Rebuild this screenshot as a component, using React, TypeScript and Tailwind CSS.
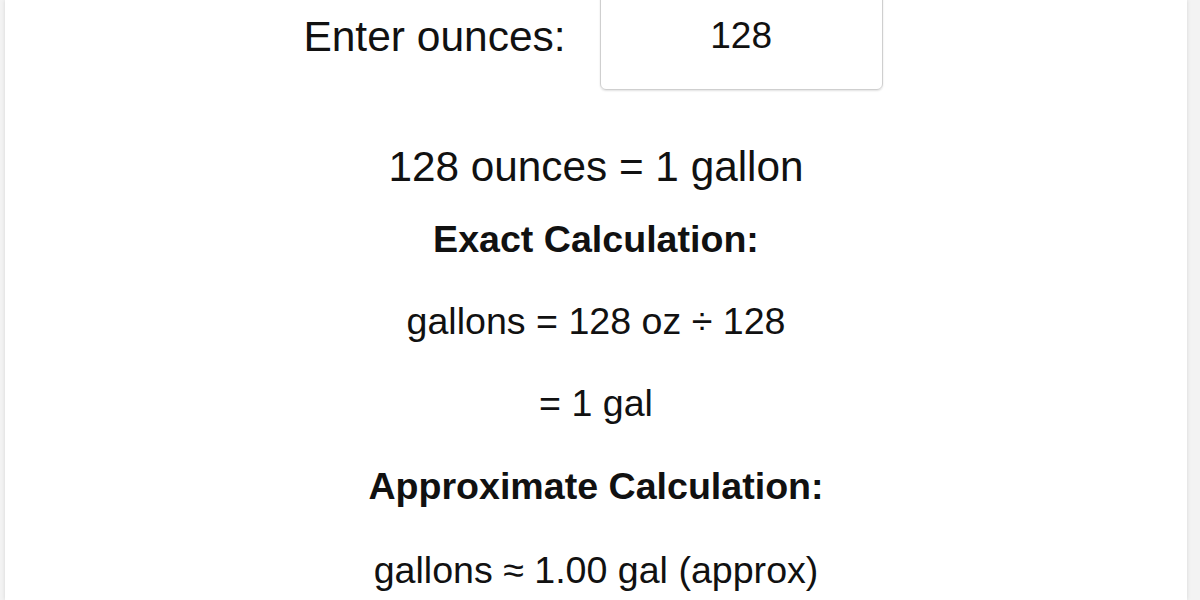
const App = () => {
  return (
    <div className="w-[1200px] h-[600px] overflow-hidden bg-[#f3f3f3] font-['Liberation_Sans',Arial,sans-serif] text-[#111]">
      <div className="ml-[5px] w-[1182px] h-full bg-white shadow-[0_0_4px_rgba(0,0,0,0.12)] flex flex-col items-center">
        <div className="-mt-[18px] flex items-center gap-[34px] ml-[-6px]">
          <label className="text-[42.5px] leading-[49px]">Enter ounces:</label>
          <input
            type="text"
            defaultValue="128"
            className="w-[283px] h-[108px] rounded-[6px] border border-[#cfcfcf] shadow-[0_1px_2px_rgba(0,0,0,0.12)] text-center text-[37px] text-[#111] outline-none"
          />
        </div>
        <p className="mt-[53px] text-[42.3px] leading-[48px]">128 ounces = 1 gallon</p>
        <p className="mt-[27px] text-[37.6px] leading-[43px] font-bold">Exact Calculation:</p>
        <p className="mt-[39px] text-[37.6px] leading-[43px]">gallons = 128 oz ÷ 128</p>
        <p className="mt-[39px] text-[37.6px] leading-[43px]">= 1 gal</p>
        <p className="mt-[40px] text-[37.6px] leading-[43px] font-bold">Approximate Calculation:</p>
        <p className="mt-[41px] text-[37.6px] leading-[43px]">gallons ≈ 1.00 gal (approx)</p>
      </div>
    </div>
  );
};

export default App;
